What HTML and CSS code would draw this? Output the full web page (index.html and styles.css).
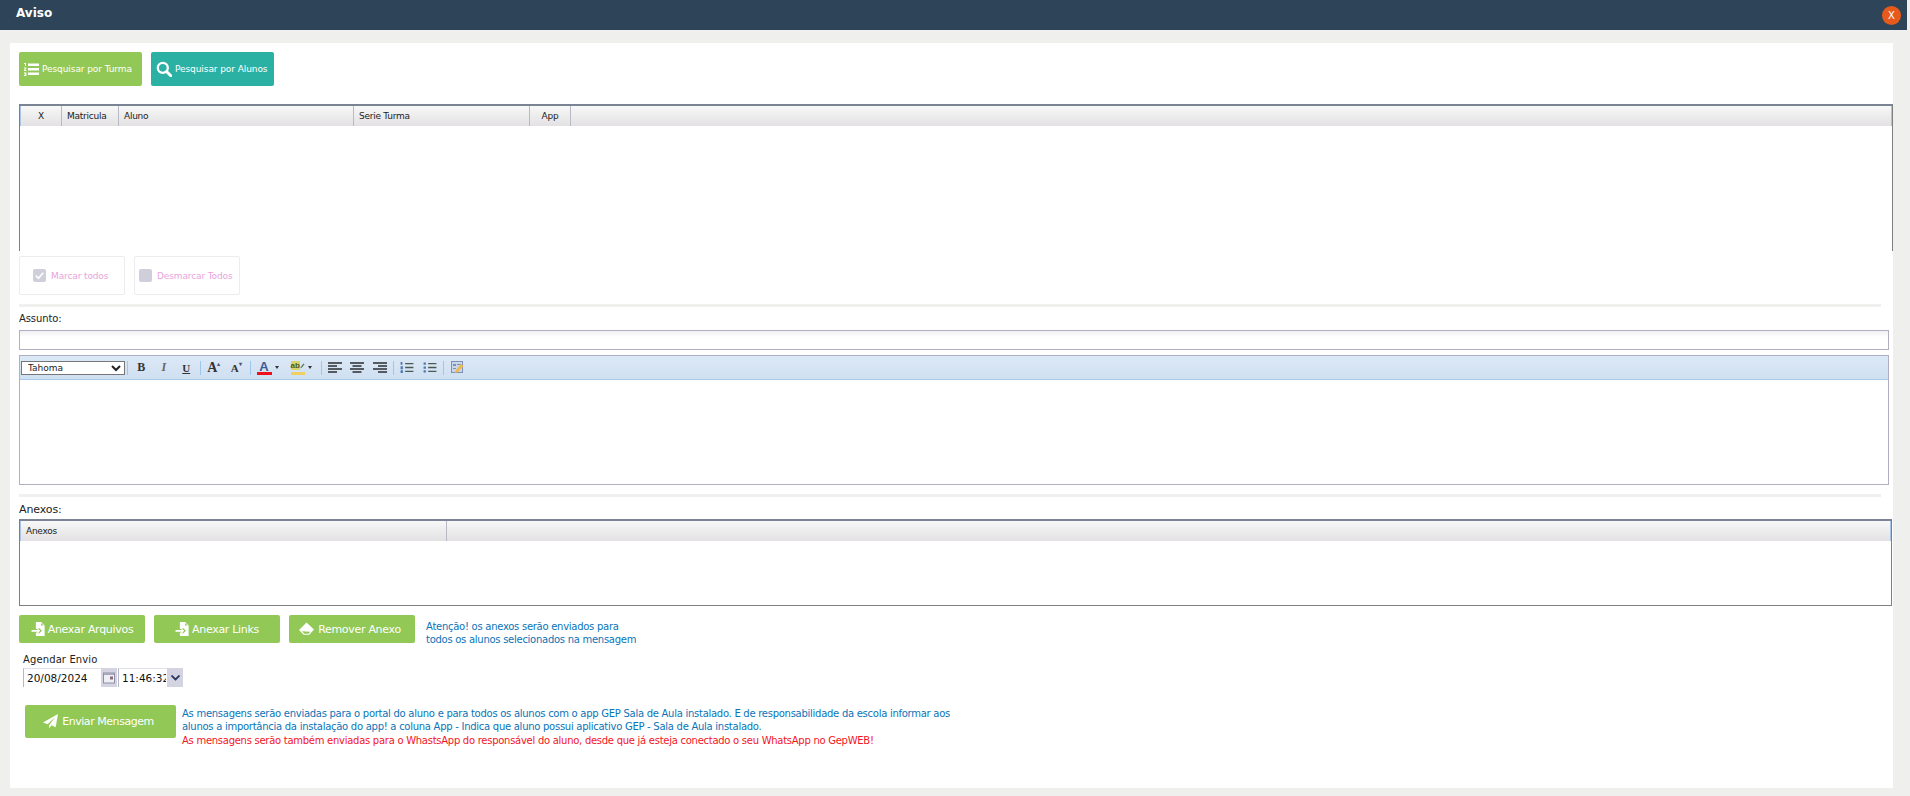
FILE: index.html
```html
<!DOCTYPE html>
<html lang="pt">
<head>
<meta charset="utf-8">
<title>Aviso</title>
<link rel="stylesheet" href="styles.css">
</head>
<body>
<header class="titlebar">
  <span class="title">Aviso</span>
  <span class="close">X</span>
</header>
<main class="panel">
  <div class="search-row">
    <a class="btn small lime"><svg class="ic-list" viewBox="0 0 15 13"><path d="M0 0h2v3H1V1H0zM0 4.500h2.400v1L1.200 7h1.200v1H0V7l1.400-1.500H0zM0 9.500h2.400V13H0v-1h1.400v-.5H.6v-1h.8V10.500H0z" fill="#fff"/><path d="M4 .5h11V3H4zM4 5h11v2.500H4zM4 9.500h11V12H4z" fill="#fff"/></svg>Pesquisar por Turma</a>
    <a class="btn small teal"><svg class="ic-search" viewBox="0 0 16 16"><circle cx="6.800" cy="6.800" r="5" fill="none" stroke="#fff" stroke-width="2.300"/><path d="M10.500 10.500l4.300 4.300" stroke="#fff" stroke-width="3" stroke-linecap="round"/></svg>Pesquisar por Alunos</a>
  </div>
  <section class="grid grid-main">
    <div class="grid-head">
      <span class="col c-x">X</span>
      <span class="col c-mat">Matricula</span>
      <span class="col c-alu">Aluno</span>
      <span class="col c-ser">Serie Turma</span>
      <span class="col c-app">App</span>
    </div>
  </section>
  <div class="mark-row">
    <div class="mark m1"><span class="box"><svg viewBox="0 0 12 12"><path d="M2.500 6l2.500 2.500 4.500-5" fill="none" stroke="#fff" stroke-width="1.500"/></svg></span>Marcar todos</div>
    <div class="mark m2"><span class="box"></span>Desmarcar Todos</div>
  </div>
  <hr class="rule rule-1">
  <label class="label">Assunto:</label>
  <div class="subject"></div>
  <section class="editor">
    <div class="toolbar">
      <select class="font"><option>Tahoma</option></select>
      <span class="sep"></span>
      <div class="tgroup">
        <span class="tb t-b">B</span><span class="tb t-i">I</span><span class="tb t-u">U</span>
      </div>
      <span class="sep"></span>
      <div class="tgroup">
        <span class="tb t-big">A<sup>▴</sup></span><span class="tb t-sm">A<sup>▾</sup></span>
      </div>
      <span class="sep"></span>
      <div class="tgroup">
        <span class="tb wide"><span class="t-col">A</span><i class="caret"></i></span>
        <span class="tb wide2"><span class="t-hl"><b class="ab">ab</b><svg viewBox="0 0 8 10"><path d="M.5 9l1-2.500L6 .5 7.800 1.800 3 8z" fill="#5f7f46"/></svg></span><i class="caret"></i></span>
      </div>
      <span class="sep"></span>
      <div class="tgroup">
        <span class="tb"><svg class="ic-al" viewBox="0 0 14 11"><path d="M0 0h14v2H0zM0 3h9v2H0zM0 6h14v2H0zM0 9h9v2H0z" fill="#555a60"/></svg></span>
        <span class="tb"><svg class="ic-al" viewBox="0 0 14 11"><path d="M0 0h14v2H0zM2.500 3h9v2h-9zM0 6h14v2H0zM2.500 9h9v2h-9z" fill="#555a60"/></svg></span>
        <span class="tb"><svg class="ic-al" viewBox="0 0 14 11"><path d="M0 0h14v2H0zM5 3h9v2H5zM0 6h14v2H0zM5 9h9v2H5z" fill="#555a60"/></svg></span>
      </div>
      <span class="sep"></span>
      <div class="tgroup">
        <span class="tb"><svg class="ic-al" viewBox="0 0 14 12"><path d="M0 0h2v3H0zM0 4.500h2.500v3.500H0zM0 9h2.500v3H0z" fill="#4b78b0"/><path d="M5 1h9v1.400H5zM5 5.300h9v1.400H5zM5 9.600h9V11H5z" fill="#4a5a50"/></svg></span>
        <span class="tb"><svg class="ic-al" viewBox="0 0 14 12"><path d="M0 .500h2.500V3H0zM0 4.800h2.500v2.500H0zM0 9h2.500v2.500H0z" fill="#4b78b0"/><path d="M5 1h9v1.400H5zM5 5.300h9v1.400H5zM5 9.600h9V11H5z" fill="#4a5a50"/></svg></span>
      </div>
      <span class="sep"></span>
      <div class="tgroup">
        <span class="tb"><svg class="ic-html" viewBox="0 0 13 13"><rect x=".5" y=".5" width="11" height="11" fill="#c9d5e8" stroke="#7f8fb5"/><path d="M2 3h3v2H2zM6 3h4v1H6zM2 7h3v1H2z" fill="#7f8fb5"/><path d="M4 12l1-3 5-6 2.500 2-5.500 6z" fill="#efb94c"/></svg></span>
      </div>
    </div>
    <div class="editor-body"></div>
  </section>
  <hr class="rule rule-2">
  <label class="label anexos-label">Anexos:</label>
  <section class="grid grid-files">
    <div class="grid-head">
      <span class="col c-file">Anexos</span>
    </div>
  </section>
  <div class="attach-row">
    <a class="btn mid a1"><svg class="ic-file" viewBox="0 0 16 16"><path d="M5 0h6l4 4v12H5v-4h3v1.800L12 10 8 6.200V8H5zM11 1v3h3z" fill="#fff"/><path d="M0 9h7V7l3 3-3 3v-2H0z" fill="#fff"/></svg>Anexar Arquivos</a>
    <a class="btn mid a2"><svg class="ic-file" viewBox="0 0 16 16"><path d="M5 0h6l4 4v12H5v-4h3v1.800L12 10 8 6.200V8H5zM11 1v3h3z" fill="#fff"/><path d="M0 9h7V7l3 3-3 3v-2H0z" fill="#fff"/></svg>Anexar Links</a>
    <a class="btn mid a3"><svg class="ic-eraser" viewBox="0 0 16 14"><path d="M8 0l8 7.500-5 5.500H5L0 8zM3 9.500L5.800 12h4.400l1.800-2z" fill="#fff" fill-rule="evenodd"/></svg>Remover Anexo</a>
    <p class="note">Atenção! os anexos serão enviados para<br>todos os alunos selecionados na mensagem</p>
  </div>
  <div class="schedule">
    <div class="sched-label">Agendar Envio</div>
    <div class="sched-fields">
      <span class="field date">20/08/2024</span>
      <span class="side cal"><svg viewBox="0 0 12 12"><rect x=".5" y="1" width="11" height="10" fill="#eef0f6" stroke="#8f8fa5"/><path d="M1 1h10v2H1z" fill="#a9a9bd"/><rect x="7" y="4.500" width="3" height="3" fill="#8a6a7a"/></svg></span>
      <span class="field time"><span>11:46:32</span></span>
      <span class="side drop"><svg viewBox="0 0 9 6"><path d="M.5 .5L4.500 4.500 8.500 .5" fill="none" stroke="#2a3560" stroke-width="1.800"/></svg></span>
    </div>
  </div>
  <div class="send-row">
    <a class="btn send"><svg class="ic-plane" viewBox="0 0 16 16"><path d="M16 0L13.500 14 9 12l-2.500 3.500V12L13 3.500 4.800 10.800 0 9z" fill="#fff"/></svg>Enviar Mensagem</a>
    <div class="send-notes">
      <p class="note">As mensagens serão enviadas para o portal do aluno e para todos os alunos com o app GEP Sala de Aula instalado. E de responsabilidade da escola informar aos<br>alunos a importância da instalação do app! a coluna App - Indica que aluno possui aplicativo GEP - Sala de Aula instalado.</p>
      <p class="note red">As mensagens serão também enviadas para o WhastsApp do responsável do aluno, desde que já esteja conectado o seu WhatsApp no GepWEB!</p>
    </div>
  </div>
</main>
</body>
</html>
```

FILE: styles.css
```css
* { box-sizing: border-box; }
html, body { margin: 0; height: 100%; }
body {
  background: #efefed;
  font-family: "DejaVu Sans", sans-serif;
  font-size: 10px;
  color: #111;
  overflow: hidden;
}
.titlebar {
  width: 1907px;
  height: 30px;
  background: #2d4459;
  display: flex;
  align-items: center;
  justify-content: space-between;
  padding: 0 6px 4px 16px;
}
.title { color: #fff; font-size: 12px; font-weight: bold; }
.close {
  width: 19px; height: 19px; margin-top: 4px;
  border-radius: 50%;
  background: #e75a1c;
  color: #fff;
  font-size: 10px;
  display: flex; align-items: center; justify-content: center;
}
.panel {
  width: 1883px;
  height: 745px;
  margin: 13px 0 0 10px;
  background: #fff;
  padding: 9px 0 0 9px;
}
.btn {
  display: flex;
  align-items: center;
  background: #92c855;
  color: #fff;
  border-radius: 2px;
}
.small { width: 123px; height: 34px; font-size: 9px; padding-left: 5px; letter-spacing: -.08px; }
.lime { background: #92c855; }
.teal { background: #2ab1a4; }
.search-row { display: flex; gap: 9px; }
.ic-list { width: 15px; height: 13px; margin-right: 3px; }
.ic-search { width: 16px; height: 16px; margin-right: 3px; }

.grid { border: 1px solid #7f7f7f; border-top: 2px solid #7a8494; background: #fff; }
.grid-main { width: 1874px; height: 147px; margin-top: 18px; border-bottom: 0; }
.grid-files { width: 1873px; height: 87px; margin-top: 3px; }
.grid-head {
  height: 20px;
  display: flex;
  border-left: 1px solid #a9c4e4;
  border-right: 1px solid #a9c4e4;
  background: linear-gradient(#f8f8f8, #e3e1e3);
}
.col {
  display: flex; align-items: center;
  font-size: 9px;
  letter-spacing: -.25px;
  color: #222;
  padding-left: 5px;
  border-right: 1px solid #b9b9c6;
}
.c-x { width: 41px; justify-content: center; padding: 0; }
.c-mat { width: 57px; }
.c-alu { width: 235px; }
.c-ser { width: 176px; }
.c-app { width: 41px; justify-content: center; padding: 0; }
.c-file { width: 426px; }

.mark-row { display: flex; gap: 9px; margin-top: 5px; }
.mark {
  height: 39px;
  border: 1px solid #ececef;
  border-radius: 2px;
  display: flex; align-items: center;
  color: #e9a3dc;
  font-size: 9px;
  letter-spacing: -.12px;
}
.m1 { width: 106px; padding-left: 13px; }
.m2 { width: 106px; padding-left: 4px; }
.box {
  width: 13px; height: 13px;
  background: #cfcedb;
  border-radius: 2px;
  margin-right: 5px;
  display: flex;
}
.rule { border: 0; height: 3px; background: #f0f0ee; margin: 0; width: 1862px; }
.rule-1 { margin-top: 9px; }
.rule-2 { margin-top: 9px; }
.label { display: block; font-size: 10px; color: #222; line-height: 12px; letter-spacing: -.1px; }
.rule-1 + .label { margin-top: 6px; }
.subject {
  width: 1870px; height: 20px; margin-top: 5px;
  border: 1px solid #afb1c2;
  background: linear-gradient(#f0f0f2, #fff 6px);
}
.editor {
  width: 1870px; height: 130px; margin-top: 5px;
  border: 1px solid #afb1c2;
  display: flex; flex-direction: column;
}
.toolbar {
  height: 24px;
  background: linear-gradient(#dce8f6, #cfe0f2);
  border-bottom: 1px solid #a9c8ea;
  display: flex; align-items: center;
  padding-left: 1px;
}
.font {
  width: 104px; height: 14px;
  padding: 0 0 0 2px; margin: 0 2px 0 0;
  font: 9px "DejaVu Sans", sans-serif;
  border: 1px solid #767676;
  background: #fff;
  color: #222;
  border-radius: 0;
}
.sep { width: 1px; height: 14px; background: #9cc8ee; }
.tgroup { display: flex; padding: 0 2px; align-items: center; }
.tb {
  width: 22.5px; height: 14px;
  display: flex; align-items: center; justify-content: center;
  font-family: "Liberation Serif", serif;
  color: #333;
  position: relative;
}
.t-b { font-size: 12px; font-weight: bold; }
.t-i { font-size: 12px; font-style: italic; font-weight: bold; color: #666; }
.t-u { font-size: 11px; font-weight: bold; text-decoration: underline; }
.t-big { font-size: 14px; font-weight: bold; }
.t-sm { font-size: 11px; font-weight: bold; }
.t-big sup, .t-sm sup { font-size: 6px; color: #557; line-height: 6px; align-self: flex-start; }
.wide { width: 30px; justify-content: flex-start; padding-left: 4px; }
.wide2 { width: 36px; justify-content: flex-start; padding-left: 8px; }
.t-col {
  width: 15px; height: 14px;
  font: bold 13px/11px "Liberation Sans", sans-serif;
  color: #3c5a96;
  text-align: center;
  border-bottom: 3px solid #f0101c;
}
.t-hl {
  width: 14px; height: 14px;
  display: flex;
  color: #4d5a20;
  border-bottom: 3px solid #f0d060;
}
.ab {
  font: bold 8px/9px "Liberation Sans", sans-serif;
  background: #d9d36a;
  height: 9px;
}
.t-hl svg { width: 6px; height: 10px; }
.caret {
  width: 0; height: 0; margin-left: 3px;
  border: 2.500px solid transparent;
  border-top: 3px solid #333;
  border-bottom: 0;
}
.ic-al { width: 14px; height: 11px; }
.ic-html { width: 13px; height: 13px; }
.editor-body { flex: 1; background: #fff; }
.anexos-label { font-size: 11px; margin-top: 6px; line-height: 13px; letter-spacing: -.1px; }

.attach-row { display: flex; gap: 9px; margin-top: 9px; align-items: flex-start; height: 28px; }
.mid { height: 28px; width: 126px; font-size: 11px; justify-content: center; letter-spacing: -.3px; }
.a3 { padding-right: 4px; }
.ic-file { width: 15px; height: 14px; margin-right: 2px; }
.ic-eraser { width: 15px; height: 14px; margin-right: 4px; }
.note { margin: 0; font-size: 10px; line-height: 13px; color: #0a74b8; letter-spacing: -.27px; }
.attach-row .note { margin: 5px 0 0 2px; }
.red { color: #f4141e; margin-top: 1px; }
.schedule { margin: 11px 0 0 4px; }
.sched-label { font-size: 10px; line-height: 12px; color: #222; letter-spacing: .12px; }
.sched-fields { display: flex; margin-top: 2px; height: 19px; }
.field {
  height: 19px;
  font-size: 10.500px;
  line-height: 18px;
  border-left: 1px solid #b4b6ca;
  border-top: 1px solid #dfe0ea;
  padding-left: 3px;
  color: #111;
  overflow: hidden;
  white-space: nowrap;
}
.date { width: 78px; }
.time { width: 49px; margin-left: 1px; }
.time span { display: block; width: 44px; overflow: hidden; }
.side {
  width: 16px; height: 19px;
  background: #d3d3e2;
  display: flex; align-items: center; justify-content: center;
}
.cal svg { width: 12px; height: 12px; }
.drop svg { width: 9px; height: 6px; }
.send-row { display: flex; margin: 18px 0 0 6px; align-items: flex-start; }
.send { width: 151px; height: 33px; font-size: 11px; justify-content: center; letter-spacing: -.45px; padding-right: 4px; }
.ic-plane { width: 15px; height: 15px; margin-right: 4px; }
.send-notes { margin-left: 6px; margin-top: 2px; }
```
